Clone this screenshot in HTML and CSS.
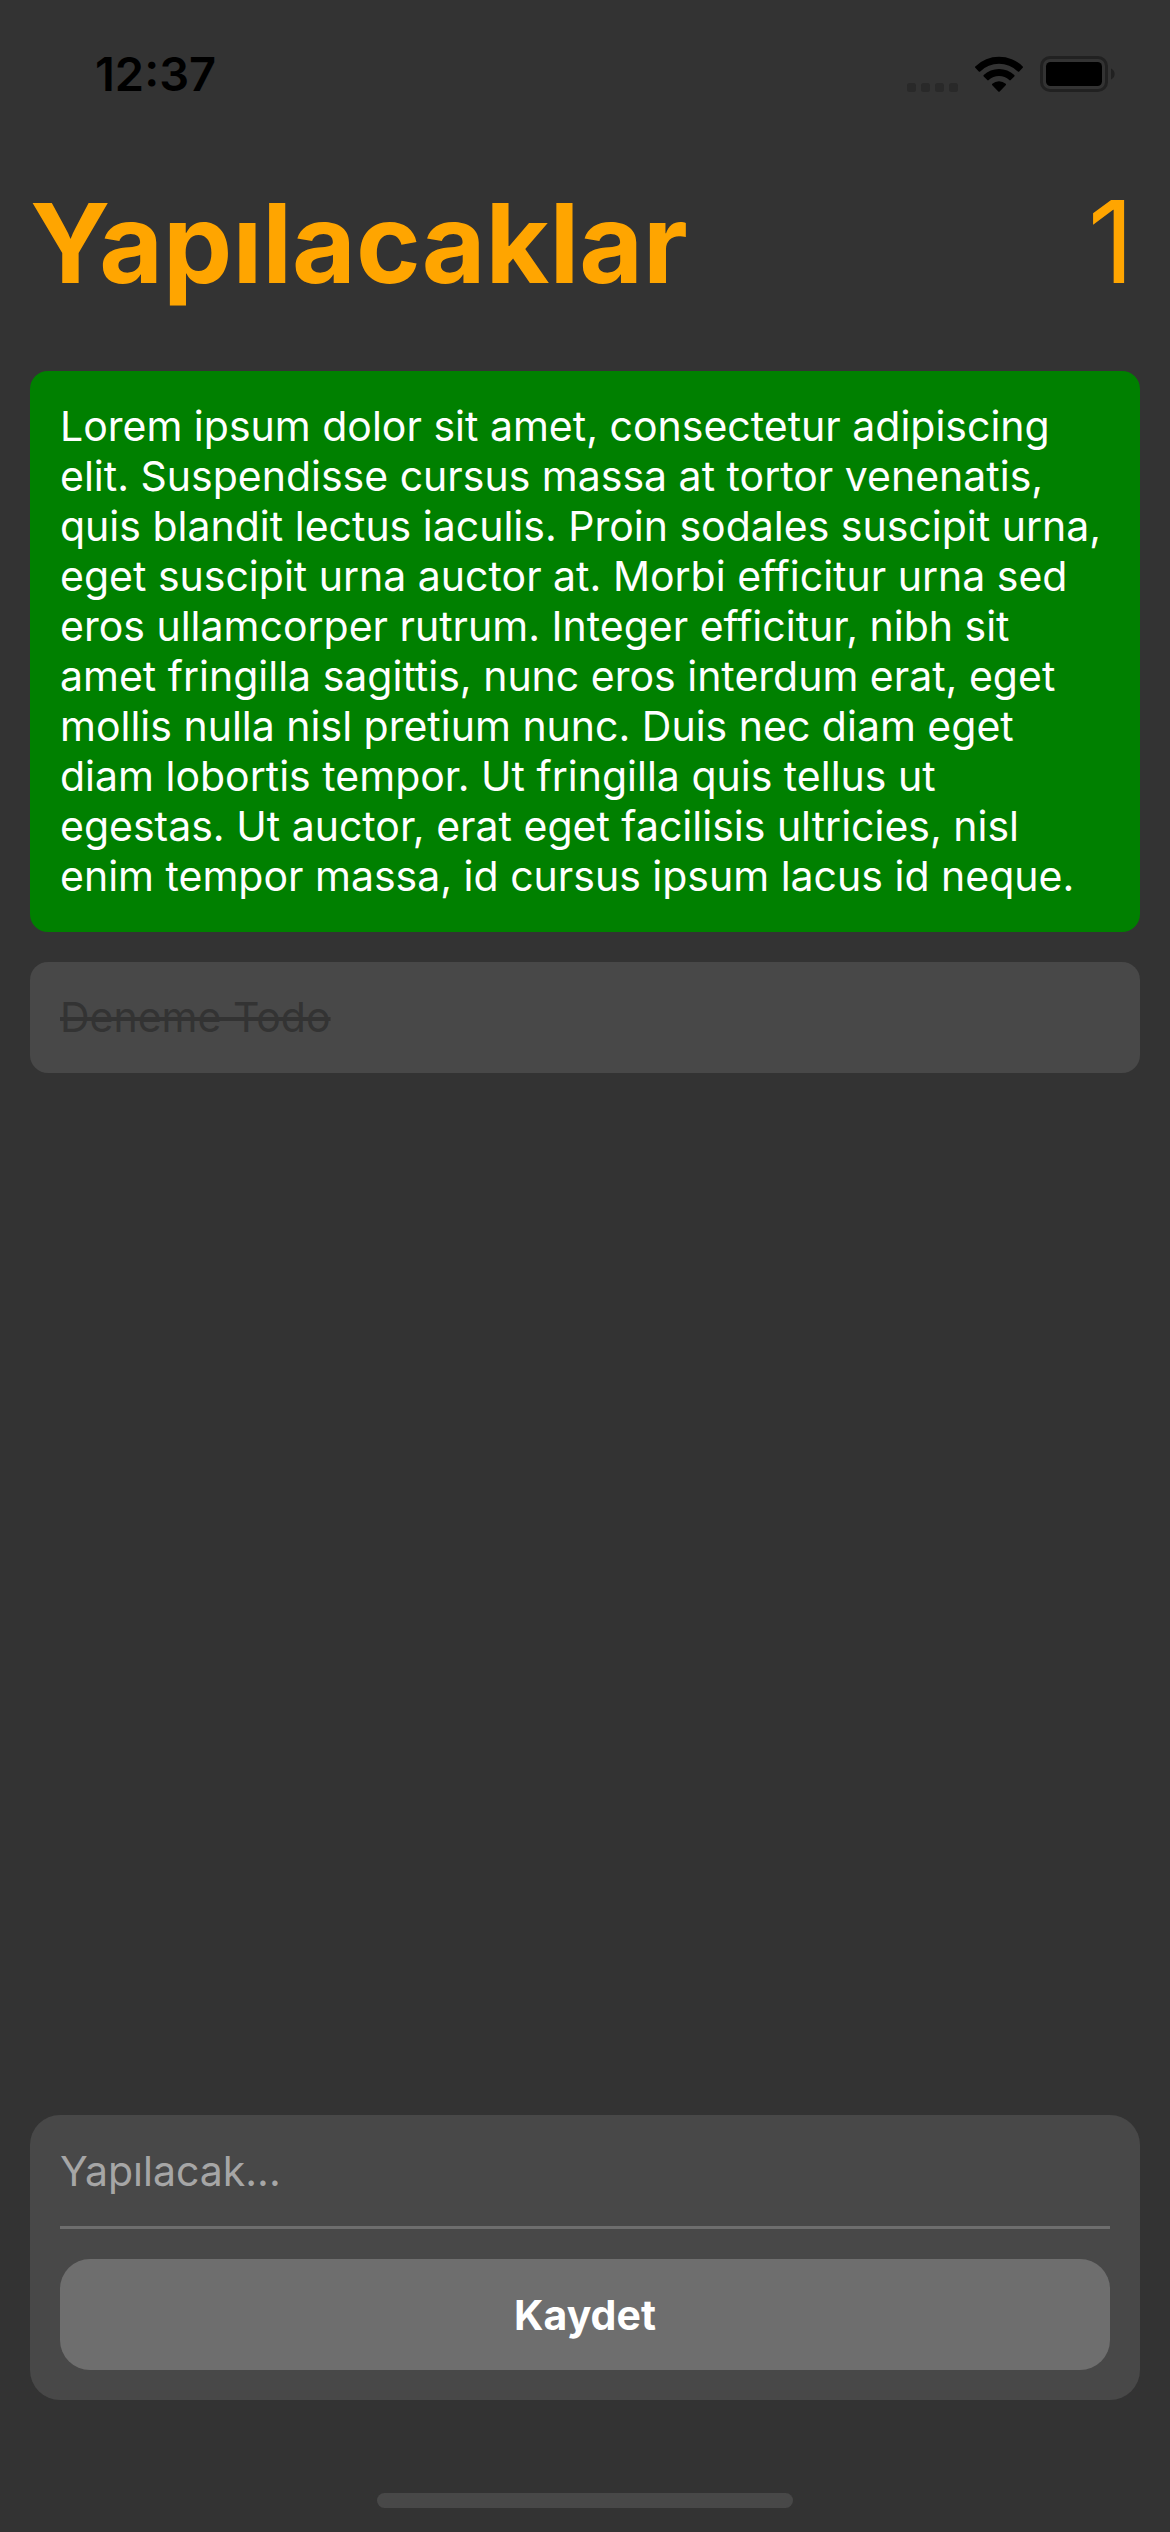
FILE: index.html
```html
<!DOCTYPE html>
<html lang="tr">
<head>
  <meta charset="utf-8">
  <meta name="viewport" content="width=device-width, initial-scale=1">
  <title>Yapılacaklar</title>
  <link rel="stylesheet" href="styles.css">
</head>
<body>
  <div class="app">
    <div class="status-bar">
      <time class="clock">12:37</time>
      <div class="status-icons">
        <svg class="signal" width="51" height="9" viewBox="0 0 51 9" aria-hidden="true">
          <rect x="0" width="9" height="9" rx="2.5"/>
          <rect x="14" width="9" height="9" rx="2.5"/>
          <rect x="28" width="9" height="9" rx="2.5"/>
          <rect x="42" width="9" height="9" rx="2.5"/>
        </svg>
        <svg width="48" height="36" viewBox="0 0 48 36" aria-hidden="true">
          <path d="M.3 10.4A34 34 0 0 1 47.7 10.4Q48.4 11.1 47.7 11.8L44.2 15.4Q43.5 16 42.8 15.4A27 27 0 0 0 5.2 15.4Q4.5 16 3.8 15.4L.3 11.8Q-.4 11.1 .3 10.4Z"/>
          <path d="M8.7 19.1A22 22 0 0 1 39.3 19.1Q40 19.8 39.3 20.5L35.7 24.1Q35 24.7 34.3 24.1A15 15 0 0 0 13.7 24.1Q13 24.7 12.3 24.1L8.7 20.5Q8 19.8 8.7 19.1Z"/>
          <path d="M17.3 27.8A10 10 0 0 1 30.7 27.8Q31.4 28.5 30.7 29.2L24.7 35.4Q24 36.1 23.3 35.4L17.3 29.2Q16.6 28.5 17.3 27.8Z"/>
        </svg>
        <svg width="75" height="36" viewBox="0 0 75 36" aria-hidden="true">
          <rect class="battery-case" x="1.5" y="1.5" width="65" height="33" rx="8.5"/>
          <rect x="6" y="6" width="56" height="24" rx="4.5"/>
          <path class="battery-tip" d="M71 12.5A6 6 0 0 1 71 23.5Z"/>
        </svg>
      </div>
    </div>

    <header class="header">
      <h1 class="title">Yapılacaklar</h1>
      <span class="count">1</span>
    </header>

    <main class="main">
      <ul class="todos">
        <li class="todo">Lorem ipsum dolor sit amet, consectetur adipiscing elit. Suspendisse cursus massa at tortor venenatis, quis blandit lectus iaculis. Proin sodales suscipit urna, eget suscipit urna auctor at. Morbi efficitur urna sed eros ullamcorper rutrum. Integer efficitur, nibh sit amet fringilla sagittis, nunc eros interdum erat, eget mollis nulla nisl pretium nunc. Duis nec diam eget diam lobortis tempor. Ut fringilla quis tellus ut egestas. Ut auctor, erat eget facilisis ultricies, nisl enim tempor massa, id cursus ipsum lacus id neque.</li>
        <li class="todo todo-done"><s>Deneme Todo</s></li>
      </ul>
    </main>

    <form class="composer">
      <input class="composer-input" type="text" placeholder="Yapılacak..." aria-label="Yapılacak">
      <button class="composer-save" type="button">Kaydet</button>
    </form>

    <div class="home-indicator"></div>
  </div>
</body>
</html>
```
FILE: styles.css
```css
* {
  box-sizing: border-box;
}

body {
  margin: 0;
  background: #333;
  color: #fff;
  font-family: Inter, "Liberation Sans", sans-serif;
  font-size: 41px;
  line-height: 50px;
}

.app {
  display: flex;
  flex-direction: column;
  min-height: 100vh;
  padding-bottom: 24px;
}

.status-bar {
  display: flex;
  align-items: center;
  justify-content: space-between;
  height: 148px;
  padding: 0 55px 0 95px;
  color: #000;
}

.clock {
  font-size: 47px;
  font-weight: 600;
}

.status-icons {
  display: flex;
  align-items: flex-end;
  gap: 17px;
}

.signal {
  fill: #292929;
}

.battery-case {
  fill: none;
  stroke: #212121;
  stroke-width: 3;
}

.battery-tip {
  fill: #212121;
}

.header {
  display: flex;
  align-items: baseline;
  justify-content: space-between;
  padding: 24px 36px 58px 30px;
  color: orange;
  font-size: 114px;
  line-height: 139px;
}

.title {
  margin: 0;
  font-size: 110px;
  font-weight: 700;
}

.main {
  flex: 1;
  padding: 0 30px 30px;
}

.todos {
  display: grid;
  gap: 30px;
  margin: 0;
  padding: 0;
  list-style: none;
}

.todo {
  padding: 30px 30px 31px;
  border-radius: 18px;
  background: green;
}

.todo-done {
  background: #484848;
  color: #333;
}

.composer {
  display: grid;
  gap: 30px;
  margin: 0 30px 93px;
  padding: 30px;
  border-radius: 30px;
  background: #484848;
}

.composer-input {
  width: 100%;
  height: 84px;
  padding: 0 0 30px;
  border: 0;
  border-bottom: 3px solid #6e6e6e;
  border-radius: 0;
  outline: 0;
  background: none;
  color: #fff;
  font: inherit;
}

.composer-input::placeholder {
  color: #a6a6a6;
  opacity: 1;
}

.composer-save {
  height: 111px;
  padding: 0;
  border: 0;
  border-radius: 30px;
  background: #6e6e6e;
  color: #fff;
  font: inherit;
  font-weight: 700;
}

.home-indicator {
  align-self: center;
  width: 416px;
  max-width: 50%;
  height: 15px;
  border-radius: 8px;
  background: #484848;
}
```
